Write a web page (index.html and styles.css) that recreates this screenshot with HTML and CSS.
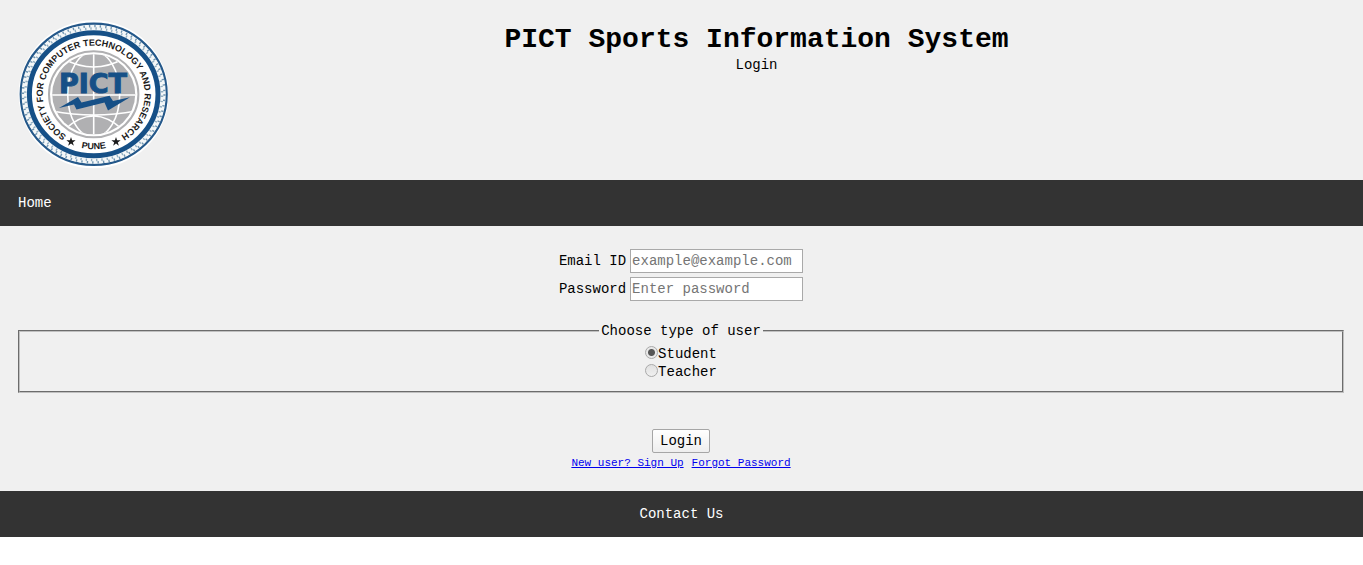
FILE: index.html
```html
<!DOCTYPE html>
<html lang="en">
<head>
<meta charset="utf-8">
<title>PICT Sports Information System</title>
<link rel="stylesheet" href="styles.css">
</head>
<body>
<header class="masthead">
  <svg class="logo" viewBox="0 0 150 150" role="img" aria-label="PICT logo">
    <defs>
      <path id="ring-text" d="M75.700 123A51 48.700 0 0 1 75.700 25.600A51 48.700 0 0 1 75.700 123"/>
      <path id="base-text" d="M19.700 74.300A56 55 0 0 0 131.700 74.300"/>
      <clipPath id="globe"><ellipse cx="75.700" cy="74.300" rx="41.500" ry="40"/></clipPath>
    </defs>
    <ellipse cx="75.700" cy="74.300" rx="75" ry="74" fill="#fff"/>
    <ellipse cx="75.700" cy="74.300" rx="72.800" ry="70.500" fill="none" stroke="#24588a" stroke-width="2.600"/>
    <ellipse cx="75.700" cy="74.300" rx="69.300" ry="66.700" fill="none" stroke="#f4f7f8" stroke-width="5.500"/>
    <ellipse cx="75.700" cy="74.300" rx="70.800" ry="68.200" fill="none" stroke="#6f94b0" stroke-width="2.400" stroke-dasharray="1.400 4.060"/>
    <ellipse cx="75.700" cy="74.300" rx="68.400" ry="65.800" fill="none" stroke="#93afc2" stroke-width="2.400" stroke-dasharray="1.400 3.870" stroke-dashoffset="-1.300"/>
    <ellipse cx="75.700" cy="74.300" rx="64.300" ry="61.500" fill="#fff" stroke="#165087" stroke-width="5"/>
    <ellipse cx="75.700" cy="74.300" rx="44.700" ry="43" fill="#fff" stroke="#b0b0b2" stroke-width="2"/>
    <g clip-path="url(#globe)">
      <rect x="30" y="30" width="92" height="90" fill="#b0b0b2"/>
      <g fill="none" stroke="#fff" stroke-width="1.600">
        <path d="M75.700 30V120M30 75H122"/>
        <ellipse cx="75.700" cy="74.300" rx="26" ry="43"/>
        <path d="M46 39Q75.700 55 105 39M46 110Q75.700 82 105 110M34 91Q75.700 99 118 91"/>
      </g>
    </g>
    <text class="logo-name" x="75" y="73" text-anchor="middle">PICT</text>
    <path d="M41 88L60 77L63.500 82.500L91.500 75.700L95 81L112 77.300L90 90.500L86.500 82.500L58.500 89.500L56 84.500Z" fill="#165087"/>
    <text class="logo-ring"><textPath href="#ring-text" startOffset="50%" text-anchor="middle">SOCIETY FOR COMPUTER TECHNOLOGY AND RESEARCH</textPath></text>
    <text class="logo-city"><textPath href="#base-text" startOffset="50%" text-anchor="middle">PUNE</textPath></text>
    <g fill="#1b1b1b">
      <path id="star" d="M53 117L54.100 120.300L57.600 120.300L54.800 122.400L55.900 125.700L53 123.600L50.100 125.700L51.200 122.400L48.400 120.300L51.900 120.300Z"/>
      <use href="#star" x="45"/>
    </g>
  </svg>
  <div class="heading">
    <h1 class="title">PICT Sports Information System</h1>
    <p class="subtitle">Login</p>
  </div>
</header>
<nav class="bar"><a class="bar-link" href="#home">Home</a></nav>
<main class="content">
  <form class="login">
    <table class="fields">
      <tr>
        <td><label for="email">Email ID</label></td>
        <td><input class="box" id="email" type="email" placeholder="example@example.com"></td>
      </tr>
      <tr>
        <td><label for="password">Password</label></td>
        <td><input class="box" id="password" type="password" placeholder="Enter password"></td>
      </tr>
    </table>
    <fieldset class="types">
      <legend class="legend">Choose type of user</legend>
      <label class="choice"><input class="radio" type="radio" name="type" checked>Student</label>
      <label class="choice"><input class="radio" type="radio" name="type">Teacher</label>
    </fieldset>
    <button class="submit" type="button">Login</button>
    <div class="links"><a href="#signup">New user? Sign Up</a><a href="#forgot">Forgot Password</a></div>
  </form>
</main>
<footer class="bar bar-center"><a class="bar-link" href="#contact">Contact Us</a></footer>
</body>
</html>
```
FILE: styles.css
```css
* { box-sizing: border-box; }
body {
  margin: 0;
  background: #fff;
  color: #000;
  font: 14px/18px "Liberation Mono", monospace;
}
.masthead {
  display: flex;
  align-items: flex-start;
  padding: 20px 18px 10px;
  background: #f0f0f0;
}
.logo { width: 150px; height: 150px; flex: none; }
.logo-name {
  font: bold 27px "DejaVu Sans", sans-serif;
  fill: #165087;
  stroke: #165087;
  stroke-width: 1px;
}
.logo-ring, .logo-city { font: bold 9px "Liberation Sans", sans-serif; fill: #1b1b1b; }
.heading { flex: 1; padding-top: 4px; text-align: center; }
.title { margin: 0; font-size: 28px; line-height: 32px; }
.subtitle { margin: 0; }
.bar { padding: 14px 18px; background: #333; }
.bar-center { text-align: center; }
.bar-link { color: #fff; text-decoration: none; }
.content { padding: 20px 19px 19px 18px; background: #f0f0f0; }
.login { display: flex; flex-direction: column; align-items: center; }
.fields { border-spacing: 2px; }
.fields td { padding: 1px; }
.box {
  display: block;
  width: 173px;
  height: 24px;
  padding: 1px;
  border: 1px solid #a9a9a9;
  border-radius: 0;
  background: #fff;
  font: inherit;
}
.box::placeholder { color: #757575; }
.types {
  align-self: stretch;
  display: flex;
  flex-direction: column;
  align-items: center;
  min-width: 0;
  margin: 18px 0 36px;
  padding: 5px 12px 10px;
  border: 2px groove #c0c0c0;
}
.legend { margin: 0 auto; padding: 0 2px; }
.choice { display: flex; align-items: flex-start; }
.radio {
  appearance: none;
  width: 13px;
  height: 13px;
  margin: 1px 0 0;
  border: 1px solid #a9a9a9;
  border-radius: 50%;
  background: linear-gradient(#e0e0e0, #f0f0f0);
}
.radio:checked { background: radial-gradient(circle, #555 3px, #e8e8e8 4px); }
.submit {
  height: 24px;
  padding: 1px 7px;
  border: 1px solid #a6a6a6;
  border-radius: 2px;
  background: linear-gradient(#fff, #eee);
  color: #000;
  font: inherit;
}
.links { display: flex; gap: 8px; padding-top: 1px; font-size: 11px; }
.links a { color: #00e; }
```
